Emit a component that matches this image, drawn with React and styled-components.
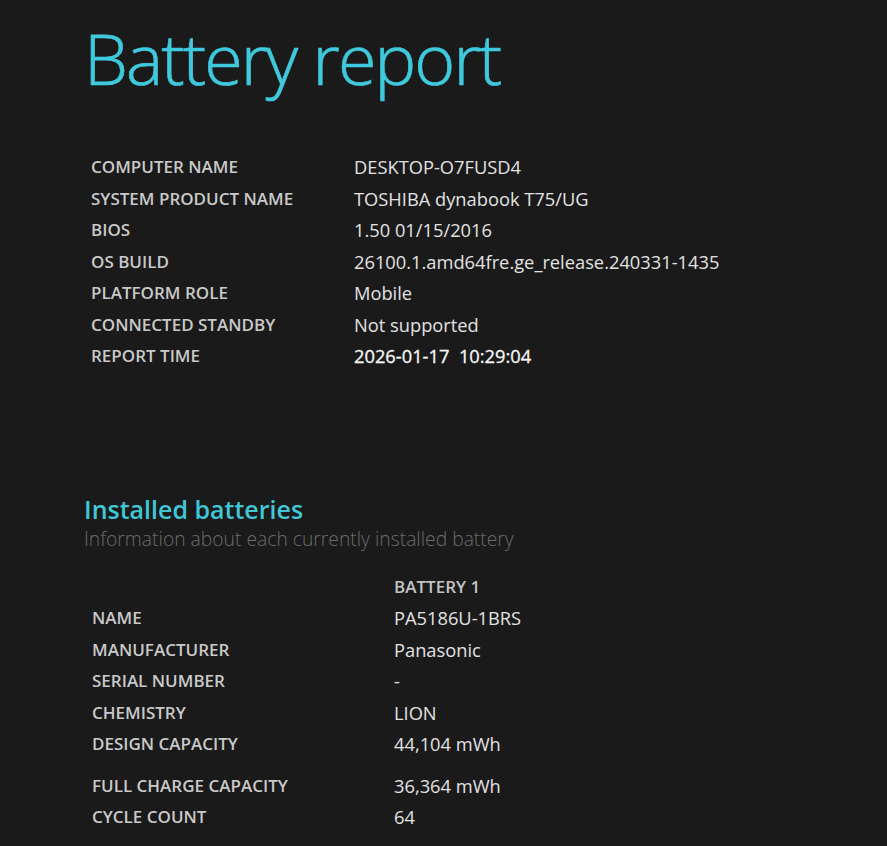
import React from "react";
import styled, { createGlobalStyle } from "styled-components";

const GlobalStyle = createGlobalStyle`
  html, body {
    margin: 0;
    padding: 0;
    background: #1a1a1a;
  }
  body {
    font-family: "Open Sans", "Noto Sans", sans-serif;
    color: #e6e6e6;
  }
`;

const Page = styled.div`
  padding: 10px 0 0 84px;
  min-height: 846px;
  box-sizing: border-box;
`;

const Title = styled.h1`
  margin: 0;
  font-weight: 300;
  font-size: 70px;
  line-height: 96px;
  letter-spacing: -1.9px;
  color: #3fc9dd;
  -webkit-text-stroke: 0.7px #3fc9dd;
`;

const InfoTable = styled.div`
  display: grid;
  grid-template-columns: ${({ $labelWidth }) => $labelWidth}px auto;
  margin: ${({ $margin }) => $margin};
`;

const Label = styled.div`
  font-weight: 600;
  font-size: 17px;
  line-height: 31.5px;
  color: #c9c9c9;
  text-transform: uppercase;
  margin-top: ${({ $gap }) => $gap || 0}px;
`;

const Value = styled.div`
  font-weight: 400;
  font-size: 18.3px;
  line-height: 31.5px;
  color: ${({ $strong }) => ($strong ? "#f6f6f6" : "#e2e2e2")};
  -webkit-text-stroke: ${({ $strong }) => ($strong ? "0.3px #f6f6f6" : "0")};
  white-space: pre;
  margin-top: ${({ $gap }) => $gap || 0}px;
`;

const ColumnHead = styled(Label)`
  color: #c4c4c4;
`;

const Section = styled.div`
  margin-top: 122px;
`;

const SectionTitle = styled.h2`
  margin: 0;
  font-weight: 600;
  font-size: 25px;
  line-height: 30px;
  color: #41c6d6;
`;

const SectionSub = styled.div`
  font-weight: 300;
  font-size: 19.3px;
  line-height: 30px;
  color: #6b6b6b;
`;

const system = [
  ["Computer name", "DESKTOP-O7FUSD4"],
  ["System product name", "TOSHIBA dynabook T75/UG"],
  ["BIOS", "1.50 01/15/2016"],
  ["OS build", "26100.1.amd64fre.ge_release.240331-1435"],
  ["Platform role", "Mobile"],
  ["Connected standby", "Not supported"],
  ["Report time", "2026-01-17  10:29:04", true],
];

const battery = [
  ["Name", "PA5186U-1BRS"],
  ["Manufacturer", "Panasonic"],
  ["Serial number", "-"],
  ["Chemistry", "LION"],
  ["Design capacity", "44,104 mWh"],
  ["Full charge capacity", "36,364 mWh", 10],
  ["Cycle count", "64"],
];

export default function App() {
  return (
    <>
      <GlobalStyle />
      <Page>
        <Title>Battery report</Title>
        <InfoTable $labelWidth={263} $margin="45px 0 0 7px">
          {system.map(([k, v, strong]) => (
            <React.Fragment key={k}>
              <Label>{k}</Label>
              <Value $strong={strong}>{v}</Value>
            </React.Fragment>
          ))}
        </InfoTable>

        <Section>
          <SectionTitle>Installed batteries</SectionTitle>
          <SectionSub>Information about each currently installed battery</SectionSub>
        </Section>

        <InfoTable $labelWidth={302} $margin="17px 0 0 8px">
          <ColumnHead as="span" />
          <ColumnHead>Battery 1</ColumnHead>
          {battery.map(([k, v, gap]) => (
            <React.Fragment key={k}>
              <Label $gap={gap}>{k}</Label>
              <Value $gap={gap}>{v}</Value>
            </React.Fragment>
          ))}
        </InfoTable>
      </Page>
    </>
  );
}
